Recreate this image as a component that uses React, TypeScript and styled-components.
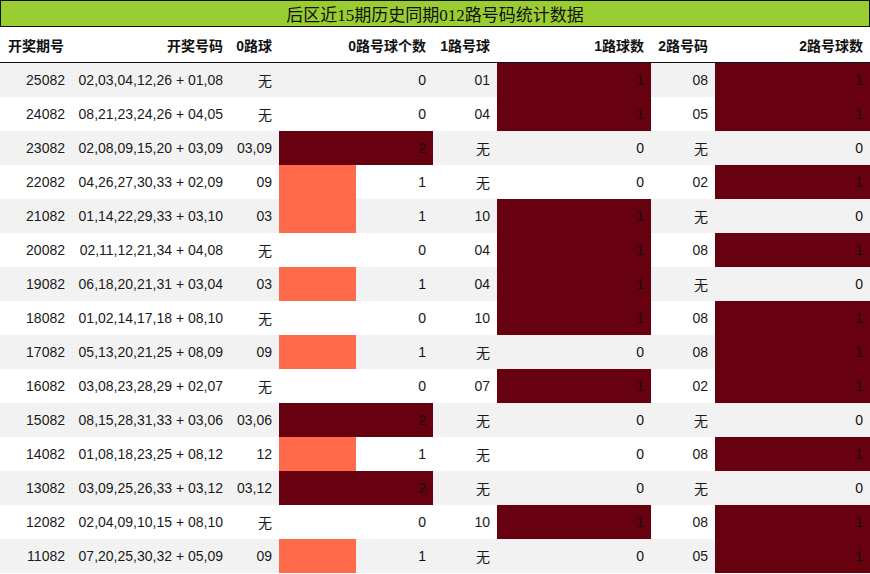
import React from "react";
import styled, { createGlobalStyle } from "styled-components";

const Global = createGlobalStyle`
  html, body { margin: 0; padding: 0; background: #fff; }
  body { font-family: "Liberation Sans", "Noto Sans CJK SC", sans-serif; color: #1a1a1a; }
`;

const Wrap = styled.div`
  width: 870px;
`;

const Title = styled.div`
  height: 25px;
  border: 1px solid #111;
  background: #9acd32;
  display: flex;
  align-items: center;
  justify-content: center;
  font-family: "Liberation Serif", "Noto Sans CJK SC", serif;
  font-size: 17px;
  color: #111;
`;

const Grid = styled.div`
  display: grid;
  grid-template-columns: 72px 158px 49px 154px 64px 154px 64px 155px;
`;

const HeadCell = styled.div`
  height: 36px;
  box-sizing: border-box;
  border-bottom: 1px solid #111;
  display: flex;
  align-items: center;
  justify-content: ${(p: { $left?: boolean }) => (p.$left ? "flex-start" : "flex-end")};
  padding: 0 7px 0 8px;
  font-weight: bold;
  font-size: 14px;
  color: #111;
  white-space: nowrap;
`;

const Cell = styled.div<{ $alt: boolean }>`
  position: relative;
  height: 34px;
  display: flex;
  align-items: center;
  justify-content: flex-end;
  padding: 0 7px;
  background: ${(p) => (p.$alt ? "#f2f2f2" : "#ffffff")};
  font-size: 14px;
  white-space: nowrap;
`;

const Bar = styled.div<{ $full: boolean }>`
  position: absolute;
  left: 0;
  top: 0;
  bottom: 0;
  background: ${(p) => (p.$full ? "#67000f" : "#ff6a4a")};
`;

const Val = styled.span`
  position: relative;
  color: #111;
`;

type Row = [string, string, string, number, string, number, string, number];

const rows: Row[] = [
  ["25082", "02,03,04,12,26 + 01,08", "无", 0, "01", 1, "08", 1],
  ["24082", "08,21,23,24,26 + 04,05", "无", 0, "04", 1, "05", 1],
  ["23082", "02,08,09,15,20 + 03,09", "03,09", 2, "无", 0, "无", 0],
  ["22082", "04,26,27,30,33 + 02,09", "09", 1, "无", 0, "02", 1],
  ["21082", "01,14,22,29,33 + 03,10", "03", 1, "10", 1, "无", 0],
  ["20082", "02,11,12,21,34 + 04,08", "无", 0, "04", 1, "08", 1],
  ["19082", "06,18,20,21,31 + 03,04", "03", 1, "04", 1, "无", 0],
  ["18082", "01,02,14,17,18 + 08,10", "无", 0, "10", 1, "08", 1],
  ["17082", "05,13,20,21,25 + 08,09", "09", 1, "无", 0, "08", 1],
  ["16082", "03,08,23,28,29 + 02,07", "无", 0, "07", 1, "02", 1],
  ["15082", "08,15,28,31,33 + 03,06", "03,06", 2, "无", 0, "无", 0],
  ["14082", "01,08,18,23,25 + 08,12", "12", 1, "无", 0, "08", 1],
  ["13082", "03,09,25,26,33 + 03,12", "03,12", 2, "无", 0, "无", 0],
  ["12082", "02,04,09,10,15 + 08,10", "无", 0, "10", 1, "08", 1],
  ["11082", "07,20,25,30,32 + 05,09", "09", 1, "无", 0, "05", 1],
];

const headers = ["开奖期号", "开奖号码", "0路球", "0路号球个数", "1路号球", "1路球数", "2路号码", "2路号球数"];

const max3 = Math.max(...rows.map((r) => r[3]));
const max5 = Math.max(...rows.map((r) => r[5]));
const max7 = Math.max(...rows.map((r) => r[7]));

function BarCell({ v, max, alt }: { v: number; max: number; alt: boolean }) {
  const ratio = max > 0 ? v / max : 0;
  return (
    <Cell $alt={alt}>
      {v > 0 && <Bar $full={ratio >= 1} style={{ width: `${ratio * 100}%` }} />}
      <Val>{v}</Val>
    </Cell>
  );
}

export default function App() {
  return (
    <Wrap>
      <Global />
      <Title>后区近15期历史同期012路号码统计数据</Title>
      <Grid>
        {headers.map((h, i) => (
          <HeadCell key={h} $left={i === 0}>
            {h}
          </HeadCell>
        ))}
        {rows.map((r, i) => {
          const alt = i % 2 === 0;
          return (
            <React.Fragment key={r[0]}>
              <Cell $alt={alt}>{r[0]}</Cell>
              <Cell $alt={alt}>{r[1]}</Cell>
              <Cell $alt={alt}>{r[2]}</Cell>
              <BarCell v={r[3]} max={max3} alt={alt} />
              <Cell $alt={alt}>{r[4]}</Cell>
              <BarCell v={r[5]} max={max5} alt={alt} />
              <Cell $alt={alt}>{r[6]}</Cell>
              <BarCell v={r[7]} max={max7} alt={alt} />
            </React.Fragment>
          );
        })}
      </Grid>
    </Wrap>
  );
}
